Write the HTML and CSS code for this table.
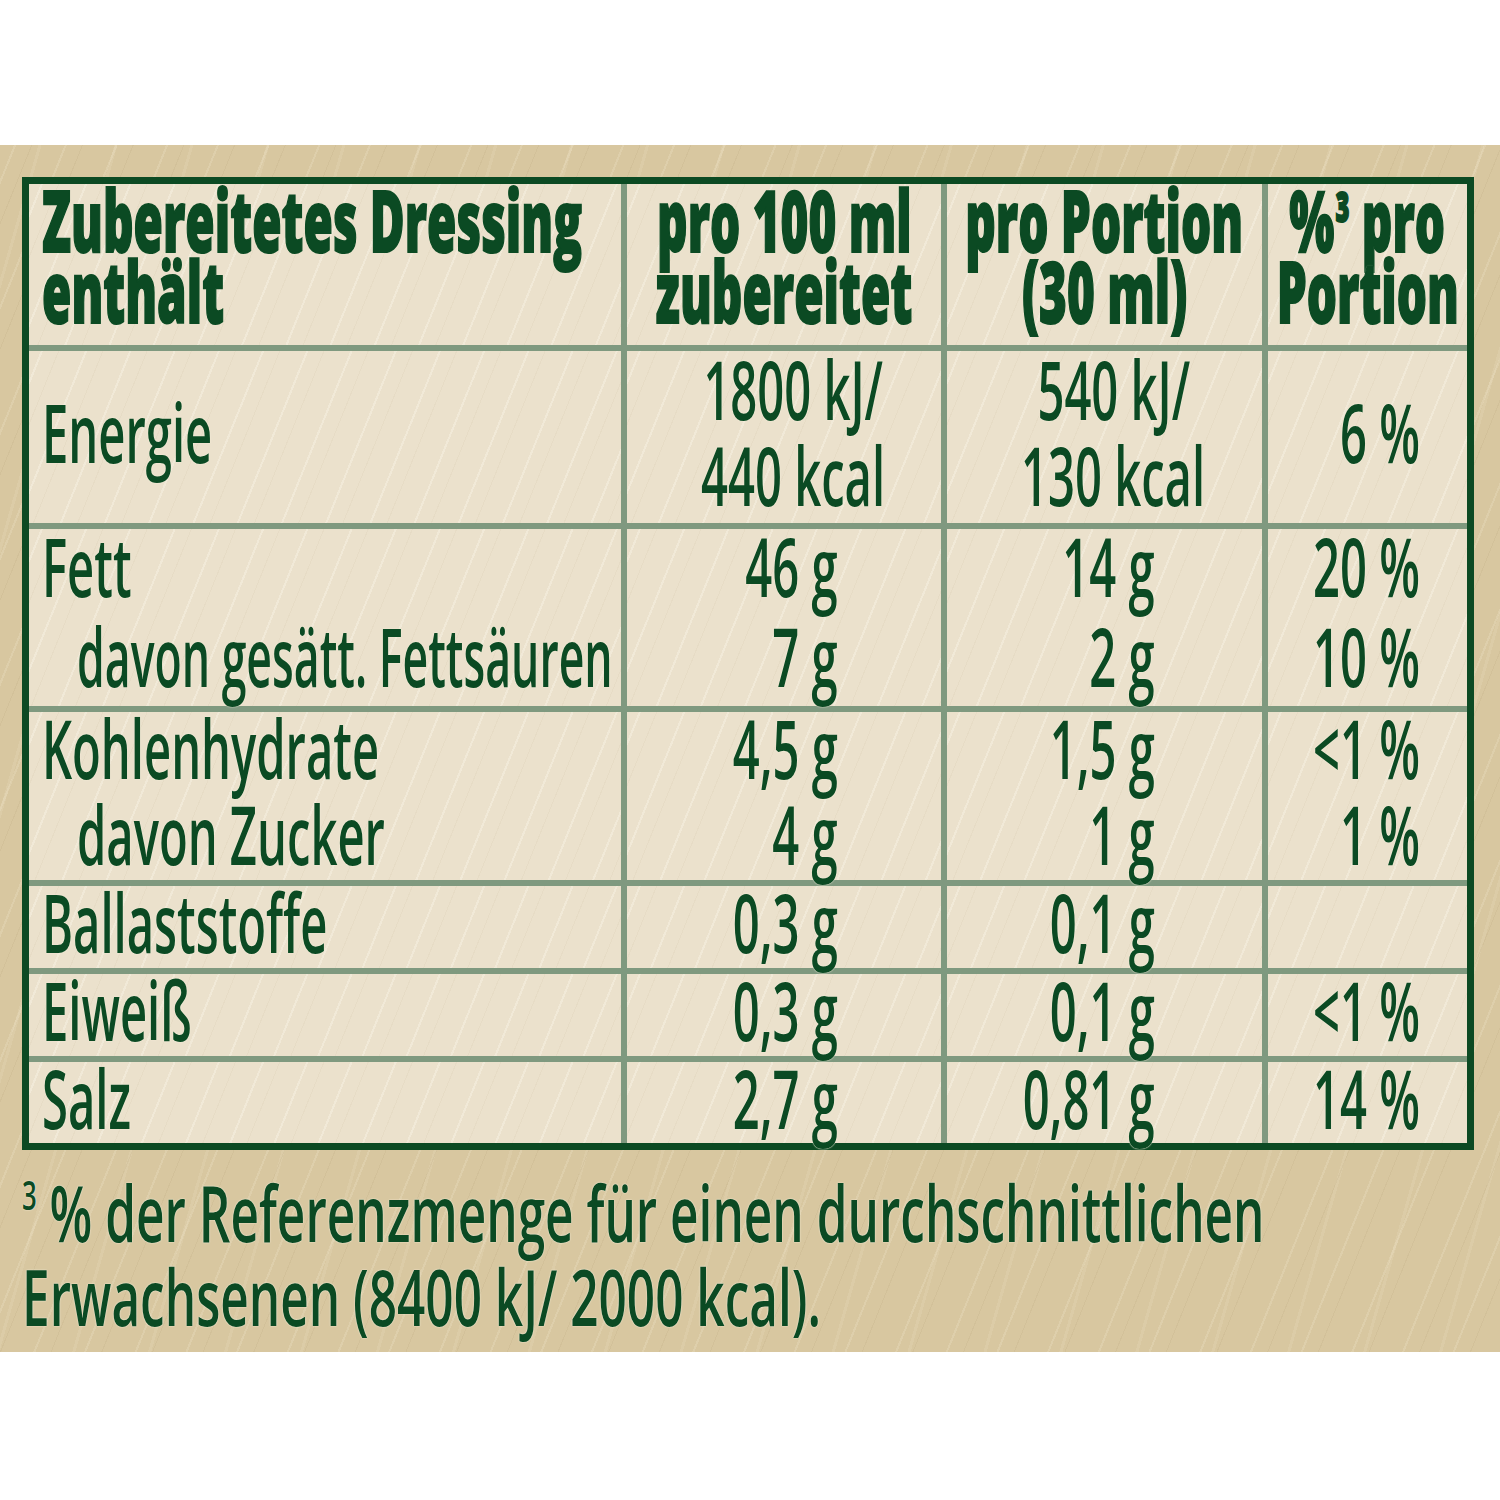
FILE: index.html
```html
<!DOCTYPE html>
<html lang="de">
<head>
<meta charset="utf-8">
<title>Nährwerte</title>
<link rel="stylesheet" href="styles.css">
</head>
<body>
<section class="panel">
  <div class="table">
    <div class="cell head"><div class="ln l"><span class="t b">Zubereitetes Dressing</span></div><div class="ln l"><span class="t b">enthält</span></div></div>
    <div class="cell head"><div class="ln c"><span class="t b">pro 100 ml</span></div><div class="ln c"><span class="t b">zubereitet</span></div></div>
    <div class="cell head"><div class="ln c"><span class="t b">pro Portion</span></div><div class="ln c"><span class="t b">(30 ml)</span></div></div>
    <div class="cell head"><div class="ln c"><span class="t b">%<span class="sup hs">3</span> pro</span></div><div class="ln c"><span class="t b">Portion</span></div></div>

    <div class="cell lab"><div class="ln l"><span class="t">Energie</span></div></div>
    <div class="cell en"><div class="ln c"><span class="t">1800 kJ/</span></div><div class="ln c"><span class="t">440 kcal</span></div></div>
    <div class="cell en"><div class="ln c"><span class="t">540 kJ/</span></div><div class="ln c"><span class="t">130 kcal</span></div></div>
    <div class="cell pc"><div class="ln r"><span class="t">6 %</span></div></div>

    <div class="cell lab wide"><div class="ln l"><span class="t">Fett</span></div><div class="ln l sub"><span class="t long">davon gesätt. Fettsäuren</span></div></div>
    <div class="cell v2 wide"><div class="ln r"><span class="t">46 g</span></div><div class="ln r"><span class="t">7 g</span></div></div>
    <div class="cell v3 wide"><div class="ln r"><span class="t">14 g</span></div><div class="ln r"><span class="t">2 g</span></div></div>
    <div class="cell pc wide"><div class="ln r"><span class="t">20 %</span></div><div class="ln r"><span class="t">10 %</span></div></div>

    <div class="cell lab"><div class="ln l"><span class="t">Kohlenhydrate</span></div><div class="ln l sub"><span class="t">davon Zucker</span></div></div>
    <div class="cell v2"><div class="ln r"><span class="t">4,5 g</span></div><div class="ln r"><span class="t">4 g</span></div></div>
    <div class="cell v3"><div class="ln r"><span class="t">1,5 g</span></div><div class="ln r"><span class="t">1 g</span></div></div>
    <div class="cell pc"><div class="ln r"><span class="t">&lt;1 %</span></div><div class="ln r"><span class="t">1 %</span></div></div>

    <div class="cell lab"><div class="ln l"><span class="t">Ballaststoffe</span></div></div>
    <div class="cell v2"><div class="ln r"><span class="t">0,3 g</span></div></div>
    <div class="cell v3"><div class="ln r"><span class="t">0,1 g</span></div></div>
    <div class="cell pc"></div>

    <div class="cell lab"><div class="ln l"><span class="t">Eiweiß</span></div></div>
    <div class="cell v2"><div class="ln r"><span class="t">0,3 g</span></div></div>
    <div class="cell v3"><div class="ln r"><span class="t">0,1 g</span></div></div>
    <div class="cell pc"><div class="ln r"><span class="t">&lt;1 %</span></div></div>

    <div class="cell lab"><div class="ln l"><span class="t">Salz</span></div></div>
    <div class="cell v2"><div class="ln r"><span class="t">2,7 g</span></div></div>
    <div class="cell v3"><div class="ln r"><span class="t">0,81 g</span></div></div>
    <div class="cell pc"><div class="ln r"><span class="t">14 %</span></div></div>
  </div>
  <div class="note">
    <div class="ln l"><span class="t n"><span class="sup">3</span> % der Referenzmenge für einen durchschnittlichen</span></div>
    <div class="ln l"><span class="t n">Erwachsenen (8400 kJ/ 2000 kcal).</span></div>
  </div>
</section>
</body>
</html>
```

FILE: styles.css
```css
html, body {
  margin: 0;
  padding: 0;
  background: #ffffff;
}

body {
  font-family: "Open Sans", "Noto Sans", "DejaVu Sans", sans-serif;
  color: #0b4a23;
}

.panel {
  margin-top: 145px;
  height: 1207px;
  box-sizing: border-box;
  padding: 32px 0 0 22px;
  background-color: #d8c7a0;
  background-image:
    repeating-linear-gradient(112deg, rgba(255,255,255,0) 0 13px, rgba(255,248,230,0.16) 13px 15px, rgba(255,255,255,0) 15px 29px, rgba(120,95,50,0.06) 29px 30px, rgba(255,255,255,0) 30px 47px),
    repeating-linear-gradient(106deg, rgba(255,255,255,0) 0 37px, rgba(255,248,230,0.10) 37px 40px, rgba(255,255,255,0) 40px 73px);
}

.table {
  display: grid;
  grid-template-columns: 592px 314px 315px 199px;
  grid-template-rows: 161px 172px 177px 168px 82px 82px 81px;
  gap: 6px;
  width: max-content;
  background: #7f997f;
  border: 7px solid #0c4a23;
}

.cell {
  background-color: #ebe1cc;
  background-image:
    repeating-linear-gradient(112deg, rgba(255,255,255,0) 0 11px, rgba(255,252,242,0.30) 11px 13px, rgba(255,255,255,0) 13px 27px, rgba(150,125,80,0.05) 27px 28px, rgba(255,255,255,0) 28px 41px);
  display: flex;
  flex-direction: column;
  justify-content: center;
  padding-bottom: 12px;
  box-sizing: border-box;
  font-size: 82px;
  line-height: 86px;
  font-weight: 600;
  min-width: 0;
}

.cell.wide {
  line-height: 90px;
  padding-bottom: 15px;
}

.cell.head {
  justify-content: flex-start;
  padding-bottom: 0;
  font-size: 85px;
  line-height: 71px;
  font-weight: 800;
}

.ln {
  display: flex;
  white-space: pre;
}

.ln.l { justify-content: flex-start; }
.ln.c { justify-content: center; }
.ln.r { justify-content: flex-end; }

.t {
  display: inline-block;
  flex: none;
  transform: scaleX(0.575);
  text-shadow: 0 0 1px #f7f0de, 0 0 2px #f7f0de;
}

.ln.l .t { transform-origin: left center; }
.ln.c .t { transform-origin: center center; }
.ln.r .t { transform-origin: right center; }

.t.long { transform: scaleX(0.544); }

.t.b {
  transform: scaleX(0.56);
  -webkit-text-stroke: 2px #0b4a23;
}

.head:first-child { padding-left: 13px; }

.lab { padding-left: 13px; }
.ln.sub { padding-left: 35px; }

.en { padding-left: 18px; }
.v2 { padding-right: 103px; }
.v3 { padding-right: 107px; }
.pc { padding-right: 47px; }

.sup {
  font-size: 0.52em;
  line-height: 0;
  vertical-align: 0.8em;
  font-weight: 600;
}

.sup.hs {
  font-size: 0.5em;
  vertical-align: 0.7em;
  margin-left: 2px;
  font-weight: 800;
}

.note {
  margin-top: 21px;
  font-size: 77px;
  line-height: 84px;
  font-weight: 600;
}

.t.n { transform: scaleX(0.643); }
```
